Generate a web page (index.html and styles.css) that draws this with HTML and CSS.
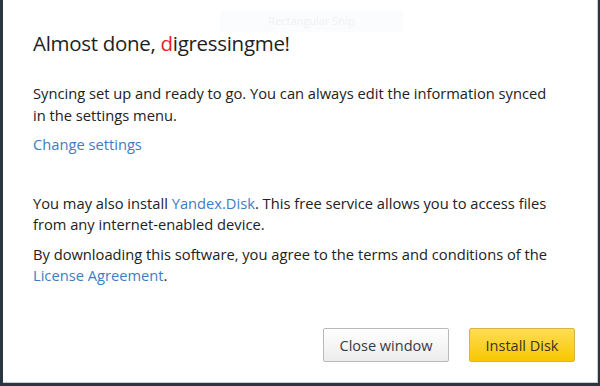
FILE: index.html
```html
<!DOCTYPE html>
<html>
<head>
<meta charset="utf-8">
<link rel="stylesheet" href="styles.css">
</head>
<body>
<div class="dialog">
  <div class="snip">Rectangular Snip</div>
  <h1 class="title">Almost done, <span class="red">d</span>igressingme!</h1>
  <p class="text">Syncing set up and ready to go. You can always edit the information synced in the settings menu.</p>
  <p class="text"><a class="link">Change settings</a></p>
  <p class="text sec2">You may also install <a class="link">Yandex.Disk</a>. This free service allows you to access files from any internet-enabled device.</p>
  <p class="text">By downloading this software, you agree to the terms and conditions of the <a class="link">License Agreement</a>.</p>
  <div class="buttons">
    <button class="btn btn-close">Close window</button>
    <button class="btn btn-install">Install Disk</button>
  </div>
</div>
</body>
</html>
```
FILE: styles.css
```css
html, body {
  margin: 0;
  padding: 0;
  width: 600px;
  height: 386px;
  overflow: hidden;
  background: #2a3642;
}
.dialog {
  position: relative;
  box-sizing: border-box;
  margin-left: 3px;
  width: 595px;
  height: 383px;
  background: #fff;
  border-right: 1px solid #c9cdd2;
  border-bottom: 1px solid #c9cdd2;
  padding: 25px 0 0 30px;
  font-family: "Open Sans", "Noto Sans", sans-serif;
  color: #222;
}
.snip {
  position: absolute;
  left: 217px;
  top: 10px;
  width: 183px;
  height: 22px;
  background: #fbfcfe;
  color: #f0f2f5;
  font-size: 11px;
  line-height: 22px;
  text-align: center;
}
.title {
  margin: 0 0 22px 0;
  font-size: 20.5px;
  letter-spacing: -0.3px;
  font-weight: normal;
  line-height: 36px;
  color: #1e1e1e;
}
.red { color: #e8231f; }
.text {
  margin: 0 0 8px 0;
  font-size: 14.7px;
  line-height: 21.5px;
  width: 518px;
}
.sec2 { margin-top: 37px; }
.link { color: #3d7ec2; text-decoration: none; }
.buttons {
  position: absolute;
  right: 22px;
  bottom: 20px;
  display: flex;
  gap: 20px;
}
.btn {
  height: 34px;
  font-family: "Open Sans", "Noto Sans", sans-serif;
  font-size: 14.5px;
  border-radius: 2px;
  padding: 0;
}
.btn-close {
  width: 126px;
  background: linear-gradient(#ffffff, #ececec);
  border: 1px solid #b9b9b9;
  color: #333b45;
}
.btn-install {
  width: 106px;
  background: linear-gradient(#ffdd55, #f8c700);
  border: 1px solid #d8b345;
  color: #3a3320;
}
```
